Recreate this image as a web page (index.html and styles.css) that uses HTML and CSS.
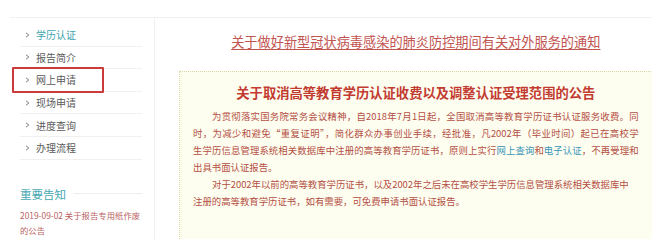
FILE: index.html
```html
<!DOCTYPE html>
<html lang="zh-CN">
<head>
<meta charset="utf-8">
<title>学历认证</title>
<link rel="stylesheet" href="styles.css">
</head>
<body>
<div class="wrap">
  <aside class="sidebar">
    <ul class="menu">
      <li class="item active"><span class="chev"><svg width="5" height="6" viewBox="0 0 5 6"><path d="M1 0.8 L3.8 3 L1 5.2" fill="none" stroke="#7a7a7a" stroke-width="1"/></svg></span>学历认证</li>
      <li class="item"><span class="chev"><svg width="5" height="6" viewBox="0 0 5 6"><path d="M1 0.8 L3.8 3 L1 5.2" fill="none" stroke="#7a7a7a" stroke-width="1"/></svg></span>报告简介</li>
      <li class="item marked"><span class="chev"><svg width="5" height="6" viewBox="0 0 5 6"><path d="M1 0.8 L3.8 3 L1 5.2" fill="none" stroke="#7a7a7a" stroke-width="1"/></svg></span>网上申请<span class="redbox"></span></li>
      <li class="item"><span class="chev"><svg width="5" height="6" viewBox="0 0 5 6"><path d="M1 0.8 L3.8 3 L1 5.2" fill="none" stroke="#7a7a7a" stroke-width="1"/></svg></span>现场申请</li>
      <li class="item"><span class="chev"><svg width="5" height="6" viewBox="0 0 5 6"><path d="M1 0.8 L3.8 3 L1 5.2" fill="none" stroke="#7a7a7a" stroke-width="1"/></svg></span>进度查询</li>
      <li class="item"><span class="chev"><svg width="5" height="6" viewBox="0 0 5 6"><path d="M1 0.8 L3.8 3 L1 5.2" fill="none" stroke="#7a7a7a" stroke-width="1"/></svg></span>办理流程</li>
    </ul>
    <div class="notice-head"><span class="notice-title">重要告知</span><span class="notice-line"></span></div>
    <p class="notice-text">2019-09-02 关于报告专用纸作废<br>的公告</p>
  </aside>
  <main class="main">
    <div class="title-row"><a class="title-link" href="#">关于做好新型冠状病毒感染的肺炎防控期间有关对外服务的通知</a></div>
    <section class="box">
      <h2 class="box-head">关于取消高等教育学历认证收费以及调整认证受理范围的公告</h2>
      <div class="para first">
        <span class="line full indent">为贯彻落实国务院常务会议精神，自2018年7月1日起，全国取消高等教育学历证书认证服务收费。同</span>
        <span class="line full">时，为减少和避免“重复证明”，简化群众办事创业手续，经批准，凡2002年（毕业时间）起已在高校学</span>
        <span class="line full">生学历信息管理系统相关数据库中注册的高等教育学历证书，原则上实行<a class="blue" href="#">网上查询</a>和<a class="blue" href="#">电子认证</a>，不再受理和</span>
        <span class="line">出具书面认证报告。</span>
      </div>
      <div class="para">
        <span class="line full indent short">对于2002年以前的高等教育学历证书，以及2002年之后未在高校学生学历信息管理系统相关数据库中</span>
        <span class="line">注册的高等教育学历证书，如有需要，可免费申请书面认证报告。</span>
      </div>
    </section>
  </main>
</div>
</body>
</html>
```

FILE: styles.css
```css
html, body {
  margin: 0;
  padding: 0;
  background: #ffffff;
  font-family: "Noto Sans CJK SC", "Noto Sans", sans-serif;
  overflow: hidden;
}

.wrap {
  margin-top: 17px;
  margin-left: 10px;
  border-top: 1px solid #f0f0f0;
  display: flex;
  height: 222px;
  overflow: hidden;
  box-sizing: border-box;
}

.sidebar {
  width: 122px;
  flex: none;
  padding: 6px 12px 0 10px;
  border-right: 1px solid #f0f0f0;
}

.menu {
  list-style: none;
  margin: 0;
  padding: 0;
}

.item {
  position: relative;
  display: flex;
  align-items: center;
  height: 21.6px;
  border-bottom: 1px solid #f0f0f0;
  font-size: 10px;
  color: #5a5a5a;
  padding-left: 5px;
}

.item.active {
  color: #3ea3ad;
}

.chev {
  display: flex;
  width: 11px;
  flex: none;
}

.redbox {
  position: absolute;
  left: -8px;
  top: -2px;
  width: 88px;
  height: 22px;
  border: 2px solid #cc3a3a;
  border-radius: 1px;
}

.notice-head {
  display: flex;
  align-items: center;
  margin-top: 25px;
  height: 18px;
}

.notice-title {
  font-size: 11.5px;
  color: #45a8b2;
  flex: none;
}

.notice-line {
  flex: 1;
  height: 1px;
  background: #eeeeee;
  margin-left: 8px;
}

.notice-text {
  margin: 5px 0 0 0;
  font-size: 8.4px;
  line-height: 15px;
  color: #bb5f5f;
}

.main {
  flex: 1;
  padding: 0 7px 0 24px;
}

.title-row {
  text-align: center;
  padding-top: 13px;
  height: 40px;
  line-height: 18px;
}

.title-link {
  font-size: 13.2px;
  color: #c25450;
  text-decoration: underline;
  text-underline-offset: 2px;
}

.box {
  border: 1px dotted #dcd6a4;
  background: #fefef0;
  padding: 10px 13px 0 13px;
  height: 200px;
}

.box-head {
  margin: 0;
  text-align: center;
  font-size: 13.3px;
  line-height: 22px;
  font-weight: bold;
  color: #c23b30;
}

.para {
  font-size: 9.4px;
  line-height: 17px;
  color: #b44e44;
  white-space: nowrap;
}

.para.first {
  margin-top: 4px;
}

.line {
  display: block;
}

.line.full {
  text-align: justify;
  text-align-last: justify;
}

.line.indent {
  padding-left: 19px;
}

.line.short {
  padding-right: 10px;
}

.blue {
  color: #3a95b8;
  text-decoration: none;
}
```
